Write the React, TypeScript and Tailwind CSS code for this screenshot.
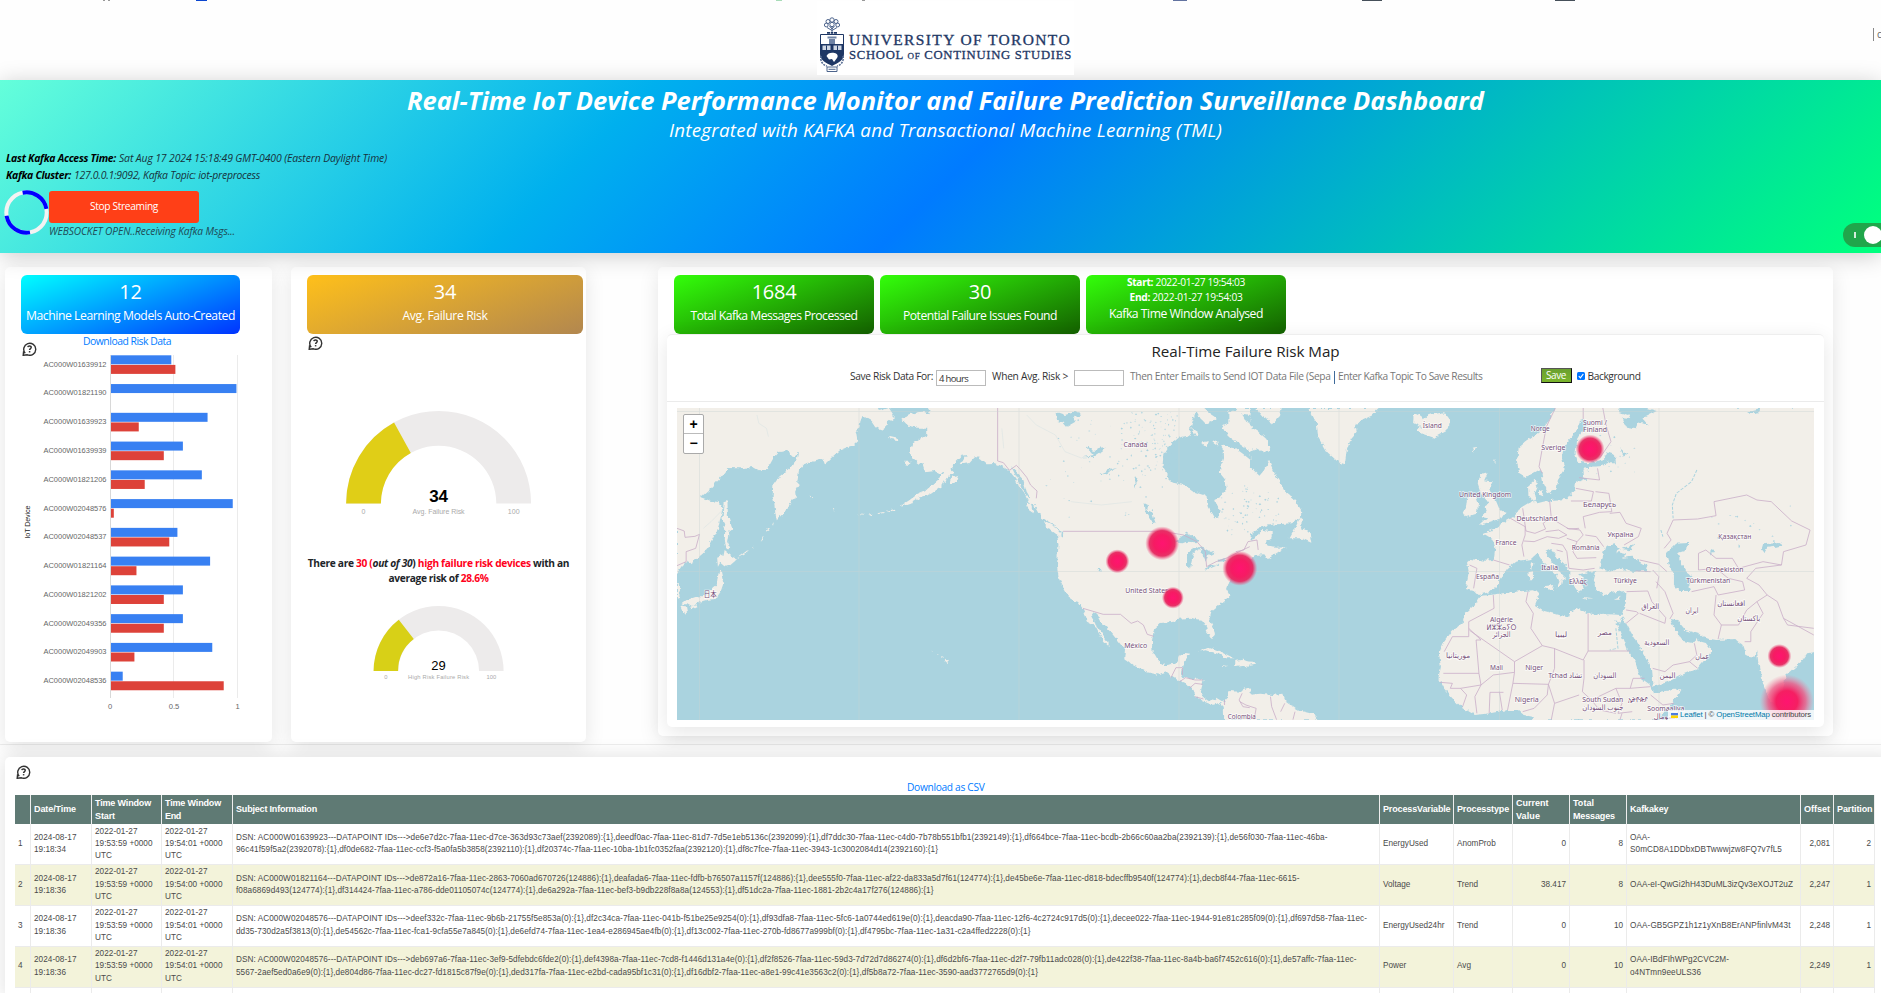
import { useLayoutEffect, useRef, type ReactNode } from "react";

/* Spreads letter-spacing so a label fills exactly the given width. */
function Fit({ w, className = "", children }: { w: number; className?: string; children: ReactNode }) {
  const ref = useRef<HTMLSpanElement>(null);
  useLayoutEffect(() => {
    const el = ref.current;
    if (!el) return;
    el.style.letterSpacing = "0px";
    const n = (el.textContent || "").length;
    const natural = el.getBoundingClientRect().width;
    el.style.letterSpacing = `${(w - natural) / n}px`;
  }, [w]);
  return (
    <span ref={ref} className={`inline-block w-max shrink-0 whitespace-nowrap ${className}`}>
      {children}
    </span>
  );
}

function HelpIcon({ className = "" }: { className?: string }) {
  return (
    <svg viewBox="0 0 15 14" className={className} fill="none" stroke="#333" strokeWidth="1.4">
      <path d="M3.2 11.2A6 6 0 1 1 5.4 12.8L1.2 13.3L1.6 9.2" />
      <path d="M5.8 5.2C6 3.6 9.4 3.6 9.2 5.5C9.1 6.6 7.6 6.6 7.6 8.1" strokeWidth="1.5" />
      <path d="M7.6 9.1V10.4" strokeWidth="1.5" />
    </svg>
  );
}

function Crest() {
  return (
    <svg viewBox="0 0 24 56" className="h-[56px] w-[24px]" fill="#1e3765">
      <g fill="none" stroke="#4d648c" strokeWidth="1">
        <circle cx="12" cy="3" r="2.2" />
        <circle cx="8" cy="4.500" r="2" />
        <circle cx="16" cy="4.500" r="2" />
        <circle cx="6.300" cy="8" r="1.900" />
        <circle cx="17.700" cy="8" r="1.900" />
        <circle cx="12" cy="7.500" r="2.200" />
        <path d="M7 10.500L12 13.500L17 10.500M12 9V15M9.500 9L12 12L14.500 9" />
      </g>
      <path d="M7 15h3v1.800H7zM10.700 15h2.600v1.800h-2.600zM14 15h3v1.800h-3z" />
      <path d="M0.5 17.5h23V28h-23z" fill="#fff" stroke="#1e3765" />
      <path d="M7.500 19.500h9v2h-9zM9 22h6v5H9z" fill="#6f83a5" />
      <path d="M0 27h24v10c0 6-6 9-12 12C6 46 0 43 0 37z" />
      <path d="M2.500 28.500h8v4.500h-8zM13.500 28.500h8v4.500h-8z" fill="#cfd7e4" />
      <path d="M6.500 28.500v4.500M17.500 28.500v4.500" stroke="#1e3765" />
      <path d="M6.500 39c1-3 5-4 8-3 3 .6 4 3 2.500 5l-3 4-2-3-3 .5z" fill="#fff" />
      <path d="M1 39c-1 4 1 9 6 10M23 39c1 4-1 9-6 10" fill="none" stroke="#5b7096" strokeWidth="1.600" strokeDasharray="2 1" />
      <path d="M7 50h10v4.500H7z" fill="#fff" stroke="#4d648c" />
      <path d="M8.500 52.300h7" stroke="#4d648c" />
    </svg>
  );
}

const bars: [string, number, number][] = [
  ["AC000W01639912", 0.482, 0.514],
  ["AC000W01821190", 0.994, 0.004],
  ["AC000W01639923", 0.767, 0.226],
  ["AC000W01639939", 0.573, 0.423],
  ["AC000W01821206", 0.722, 0.273],
  ["AC000W02048576", 0.965, 0.03],
  ["AC000W02048537", 0.53, 0.466],
  ["AC000W01821164", 0.787, 0.208],
  ["AC000W01821202", 0.573, 0.423],
  ["AC000W02049356", 0.573, 0.423],
  ["AC000W02049903", 0.804, 0.192],
  ["AC000W02048536", 0.1, 0.894],
];

function BarChart() {
  return (
    <svg viewBox="0 0 240 362" className="block h-[362px] w-[240px] font-['Liberation_Sans',sans-serif]">
      <path d="M168.500 0V343M232.500 0V343" stroke="#ebebeb" />
      {bars.map(([name, a, b], i) => {
        const y = 0.300 + i * 28.76;
        return (
          <g key={name}>
            <rect x="105" y={y} width={a * 127.2} height="9" fill="#3880f2" />
            <rect x="105" y={y + 9.600} width={b * 127.2} height="9" fill="#dd4239" />
            <text x="38.500" y={y + 11.400} fontSize="7.600" fill="#666" textLength="63" lengthAdjust="spacingAndGlyphs">
              {name}
            </text>
          </g>
        );
      })}
      <path d="M105.500 0V343" stroke="#d8d8d8" />
      <g fontSize="7.600" fill="#666" textAnchor="middle">
        <text x="105" y="353.500">0</text>
        <text x="169" y="353.500">0.5</text>
        <text x="232.500" y="353.500">1</text>
      </g>
      <text transform="translate(24.500 183.500) rotate(-90)" fontSize="7.200" fill="#222" textLength="33">
        IoT Device
      </text>
    </svg>
  );
}

function arc(cx: number, cy: number, R: number, r: number, from: number, to: number) {
  const p = (rad: number, t: number) => {
    const a = Math.PI * (1 - t);
    return `${cx + rad * Math.cos(a)} ${cy - rad * Math.sin(a)}`;
  };
  return `M${p(R, from)}A${R} ${R} 0 0 1 ${p(R, to)}L${p(r, to)}A${r} ${r} 0 0 0 ${p(r, from)}Z`;
}

function Gauge({ R, r, value, color, label, big }: { R: number; r: number; value: number; color: string; label: string; big: boolean }) {
  const c = 99.6;
  const y = R;
  const f = big ? 7 : 5.8;
  const ly = y + (big ? 10.500 : 8);
  return (
    <svg
      viewBox={`0 0 200 ${R + 14}`}
      className={big ? "block h-[106.500px] w-[200px] font-['Liberation_Sans',sans-serif]" : "block h-[79px] w-[200px] font-['Liberation_Sans',sans-serif]"}
    >
      <path d={arc(c, y, R, r, 0, 1)} fill="#edebeb" />
      <path d={arc(c, y, R, r, 0, value / 100)} fill={color} />
      <text x={c} y={y - 1.500} fontSize={big ? 17 : 13} fontWeight={big ? 700 : 400} fill="#000" textAnchor="middle">
        {value}
      </text>
      <g fontSize={f} fill="#aaa" textAnchor="middle">
        <text x={c - (R + r) / 2} y={ly}>0</text>
        <text x={c + (R + r) / 2} y={ly}>100</text>
        <text x={c} y={ly} textLength={big ? 52 : 61}>
          {label}
        </text>
      </g>
    </svg>
  );
}

const landWest = [
  "M71 39L596 39L600 48L625 39L640 65L620 80L618 95L605 106L590 95L580 78L556 62L550 80L548 100L538 108L543 140L534 150L515 157L497 166L480 182L460 205L445 194L420 202L404 207L390 225L385 262L392 270L380 292L382 310L365 316L368 332L356 345L332 376L328 355L326 330L321 305L323 270L338 245L370 215L388 185L392 160L407 148L402 170L388 172L380 185L365 180L360 165L338 168L325 185L312 212L305 222L285 226L270 216L235 220L205 219L188 245L160 280L133 307L160 318L183 322L190 340L182 385L175 410L160 445L140 475L122 492L105 505L95 500L82 515L71 535Z",
  "M71 563L78 580L77 608L71 611Z",
  "M193 322L203 318L204 360L216 403L206 412L202 440L210 458L202 466L196 440L197 400L190 370Z",
  "M193 465L212 482L226 492L210 508L195 514L184 503L178 515L176 488L190 482Z",
  "M182 525L189 532L194 560L185 590L172 612L150 614L132 620L110 636L98 628L82 628L95 616L125 604L142 604L160 584L175 570L177 548Z",
  "M80 632L97 634L99 646L91 659L85 646Z",
  "M105 638L122 630L124 635L108 644Z",
  "M625 122L648 128L650 136L630 132Z",
  "M665 200L682 200L676 210L668 208Z",
  "M725 39L735 58L715 50L700 52L680 58L660 74L675 92L700 98L725 98L725 120L705 132L688 145L680 168L684 188L700 204L713 208L720 232L745 228L757 236L768 228L758 250L740 268L722 286L700 296L680 314L662 328L655 336L680 326L705 308L735 296L765 272L775 250L795 232L785 222L800 200L815 182L828 180L812 208L835 205L850 186L865 190L880 205L900 204L920 213L940 228L955 250L965 275L978 295L990 320L1010 338L1025 368L1045 382L1068 400L1080 415L1082 428L1064 420L1068 450L1064 510L1068 545L1085 585L1100 615L1120 622L1132 642L1145 680L1162 690L1175 718L1185 738L1202 757L1198 742L1180 712L1165 688L1153 662L1160 652L1172 662L1182 685L1205 712L1225 740L1242 765L1240 790L1262 810L1300 832L1330 839L1350 832L1370 850L1400 864L1415 880L1428 903L1445 918L1470 930L1490 924L1500 935L1501 976L1570 976L1570 880L1545 890L1525 898L1512 906L1500 922L1480 908L1465 922L1448 908L1440 888L1447 855L1440 850L1415 852L1395 850L1388 838L1390 818L1396 800L1412 776L1400 774L1385 782L1378 805L1345 811L1328 797L1314 770L1312 735L1318 702L1335 684L1370 680L1378 672L1410 668L1440 674L1452 690L1456 708L1470 732L1477 718L1474 700L1462 672L1468 648L1500 618L1516 602L1506 582L1512 560L1525 540L1545 525L1565 500L1570 490L1570 39Z",
  "M1435 770L1462 757L1490 768L1510 780L1528 790L1505 790L1485 776L1455 766Z",
  "M1530 798L1552 794L1570 804L1565 815L1545 812L1530 812Z",
  "M1493 810L1510 813L1500 816Z",
  "M735 767L740 771L735 771ZM752 776L758 780L752 780ZM761 783L768 788L762 787ZM772 791L780 797L775 804L770 799Z",
  "M985 322L995 325L1003 355L990 345ZM1030 378L1060 395L1078 418L1070 424L1055 410L1036 395Z",
  "M320 388L324 382L322 392ZM308 400L304 410L311 405ZM296 425L290 440L298 432ZM272 455L262 462L270 461ZM255 466L228 490L236 485L258 470Z",
  "M418 298L424 308L420 310ZM480 340L485 345L481 346Z",
  "M640 341L620 347L622 350L642 344ZM610 351L595 355L597 357L611 354ZM585 356L572 359L575 361L586 359ZM560 360L545 356L546 358L558 362Z",
  "M790 245L806 240L800 262L785 268Z",
];

const waterWest = [
  "M1382 128L1405 122L1420 128L1440 125L1480 138L1497 160L1498 190L1491 215L1490 235L1505 256L1507 282L1490 305L1478 312L1480 328L1489 345L1485 368L1475 370L1458 335L1455 303L1420 290L1395 270L1362 262L1350 235L1340 215L1342 180L1355 155Z",
  "M1446 39L1535 39L1530 70L1512 90L1500 108L1520 130L1545 150L1570 170L1570 195L1550 176L1530 160L1496 152L1482 165L1470 142L1415 130L1410 110L1418 80L1428 50L1440 75L1456 85L1470 78L1480 68L1462 55Z",
  "M1540 55L1570 60L1570 85L1545 75Z",
  "M1060 50L1085 60L1120 48L1128 60L1105 68L1112 80L1090 95L1080 82L1065 78Z",
  "M1372 440L1385 430L1400 412L1420 425L1436 438L1425 442L1405 440L1395 445L1380 444Z",
  "M1404 470L1425 456L1440 460L1422 470L1418 490L1412 520L1404 512Z",
  "M1435 455L1455 462L1475 475L1472 482L1460 478L1452 500L1447 485L1440 470Z",
  "M1448 519L1470 508L1486 510L1460 522Z",
  "M1484 494L1508 489L1502 499L1485 500Z",
  "M1293 325L1302 330L1300 345L1312 352L1322 385L1312 378L1296 350Z",
  "M1130 187L1160 180L1168 160L1195 155L1180 170L1160 186Z",
  "M1140 155L1155 160L1165 175L1158 180Z",
  "M1178 236L1200 225L1222 218L1205 228L1185 238Z",
  "M1265 245L1275 255L1268 278Z",
  "M1175 518L1179 530L1173 528Z",
  "M945 215L975 250L985 290L995 310L982 300L966 265Z",
];

const westBorders = [
  "M909 39V198L924 203L940 226L958 211L968 223L985 247L995 270L1012 288L1010 310",
  "M1080 409H1340L1395 420L1430 440L1452 470L1455 515L1480 500L1510 488L1540 470L1568 455",
  "M1132 640L1185 658H1230L1258 685L1275 678L1290 690L1300 718L1317 724",
  "M71 400L90 408L92 427L118 424L130 418L120 460L95 470V500L71 512",
  "M1362 848L1375 818H1392V840M1385 860L1400 848L1425 855L1445 855M1410 880L1425 865L1445 868M1425 905L1447 912M1502 915V930M1548 895L1540 915L1550 935L1568 938",
];

const landEast = [
  "M-28 165L0 180L12 190L25 215L48 242L62 222L72 198L85 235L98 260L110 290L135 315L150 345L150 365L125 385L90 388L62 392L38 408L8 440L35 432L55 405L78 408L78 430L65 442L68 455L90 458L112 457L95 470L68 492L60 478L35 480L15 498L8 520L-28 540Z",
  "M-28 50L-5 45L8 62L20 90L45 110L65 132L75 165L58 172L40 160L22 168L0 130L-28 105Z",
  "M38 39L100 39L96 62L78 90L70 75L55 65Z",
  "M168 39L342 39L322 62L300 75L282 90L286 110L272 130L262 165L257 208L240 200L213 170L192 125L188 85Z",
  "M425 62L442 52L447 76L462 60L500 52L515 75L510 105L475 128L450 118L430 106L444 96L424 84Z",
  "M588 240L606 234L598 256L618 260L610 282L624 310L636 345L650 350L640 370L618 378L587 390L605 370L592 366L604 350L598 334L608 326L594 305L588 290L582 268Z",
  "M556 310L578 304L583 322L580 355L550 367L545 355L553 340Z",
  "M122 430L133 405L148 366L152 370L150 398L170 410L175 443L150 430Z",
  "M772 39L757 75L745 102L722 122L700 140L682 158L678 200L684 235L700 246L722 232L736 222L742 262L755 295L775 282L778 255L795 225L788 190L792 155L805 138L822 110L832 78L848 72L850 90L826 130L821 180L828 200L852 205L895 192L904 207L880 214L850 216L838 224L840 246L850 252L832 262L820 258L818 285L802 312L768 314L742 320L728 325L714 312L706 300L705 272L724 252L728 278L720 300L728 312L705 325L682 342L672 365L650 380L628 398L595 415L618 432L625 458L621 495L600 497L565 492L556 502L560 530L553 582L572 588L582 600L610 592L632 568L632 555L655 520L672 502L690 496L712 492L728 475L740 498L755 518L775 540L782 560L775 580L785 575L788 558L798 550L778 524L757 490L748 470L762 462L778 488L795 508L806 525L806 548L815 568L828 592L842 582L832 560L842 548L830 538L855 530L872 528L866 555L870 580L892 600L918 592L946 588L944 625L934 660L905 658L882 660L850 655L828 640L808 650L806 668L775 658L745 648L722 630L732 600L720 586L690 588L648 594L612 600L590 602L578 625L552 655L548 680L518 710L500 740L487 775L492 815L486 850L498 878L520 910L545 938L575 960L612 955L655 945L680 945L695 960L716 965L718 976L1018 976L1052 935L1080 882L1040 888L1012 895L1002 868L980 848L968 800L948 768L932 718L918 672L930 690L936 664L955 708L985 770L1005 812L1010 875L1045 862L1085 838L1120 820L1155 768L1140 744L1122 738L1120 725L1112 745L1085 738L1062 700L1052 672L1070 675L1090 705L1125 718L1135 728L1165 735L1212 732L1232 752L1240 782L1262 785L1265 765L1268 800L1275 850L1298 918L1312 932L1328 890L1336 840L1375 798L1388 775L1410 770L1410 35L772 35Z",
  "M742 574L769 570L765 588Z",
  "M706 532L718 528L716 556L708 556Z",
  "M711 506L718 504L715 528Z",
  "M840 606L865 610L845 611ZM915 614L932 605L926 614Z",
  "M732 290L742 286L740 304L732 300Z",
  "M-5 798L35 800L40 806L10 812L-5 815Z",
  "M-28 888L0 890L12 880L20 900L50 896L80 900L104 896L112 918L138 940L150 948L182 958L190 976L-28 976Z",
  "M570 155L578 153L574 170ZM622 200L626 192L625 205Z",
];

const waterEast = [
  "M880 520L884 490L895 452L918 448L930 462L918 470L945 478L935 488L960 485L978 500L998 515L995 528L960 530L928 520L905 530Z",
  "M936 462L966 446L955 466Z",
  "M1042 475L1065 446L1097 444L1094 465L1070 475L1080 505L1095 535L1105 545L1098 565L1104 588L1078 588L1062 570L1062 540L1050 512Z",
  "M1275 468L1280 448L1320 444L1330 452L1290 458L1285 470Z",
  "M898 172L918 180L920 205L905 205L893 190Z",
  "M930 160L948 178L940 184Z",
  "M930 35L985 35L1020 48L985 70L1000 92L975 82L968 100L945 95L936 70L955 72L950 60L925 50Z",
  "M1152 462L1160 466L1150 482Z",
  "M1220 445L1224 450L1220 460Z",
  "M1255 45L1275 39L1270 52L1240 58Z",
];

const eastBorders = [
  "M772 39L750 95L740 160L732 215L740 235M840 39V72M888 39L896 90L908 140L880 190",
  "M875 220L880 255L830 248M870 290L903 295L910 350L880 352L840 365L845 400M822 280L865 290L860 318H810",
  "M905 355L930 352L945 385L982 400L975 425L940 450M758 318L762 370L805 402L830 400M758 370L742 385L748 402L722 415L700 408L692 340",
  "M662 370L698 395V420L690 450L695 485M748 410L780 405L800 420L780 430L752 425L720 440L695 438",
  "M800 400L832 405L840 420L825 440L800 430M825 440L815 470L825 490L872 488M845 420L872 425L890 455M762 445L790 450L800 470L805 520L840 525L868 520M790 470L775 465",
  "M620 495L660 510M562 510L580 520L572 580M620 600L622 640L560 680V725H520L500 770",
  "M562 706L672 800L740 752L712 700L718 655L700 620L705 590M740 752L768 760L840 795L852 768V655M852 768H955",
  "M560 700L590 735H578L585 835H498M585 835L590 870L620 840L672 832L672 800M672 832L668 865L755 868L770 820V760M842 795V850L838 890L860 915L920 880L955 880L962 850L990 850",
  "M490 862L520 865L515 880L540 880L555 900L545 935M540 880L590 870M590 870L575 905L580 955M610 955L612 892H645M635 890L642 945M655 945L668 865M755 868L752 900L720 940L692 950M755 868L770 925L830 900M770 925L762 974M860 915L880 945L920 955M920 880L935 925L925 955L960 950M955 880L1005 875M1005 900L1035 930L1062 925M935 955L930 974",
  "M945 645L970 650L975 655L945 685M946 590L998 588L1008 620L1042 668L1040 685L978 655M1018 560L1040 590L1060 655L1052 672M978 495L1025 508L1045 530M1010 525L1025 545L1020 580M1010 820L1040 830L1060 810L1100 800M1112 745L1118 780L1100 800L1120 820M968 528L1005 530",
  "M1045 415L1060 375L1120 372L1165 362L1160 320L1240 300L1265 315L1300 320L1350 378L1395 405L1385 450L1330 470L1325 510L1280 500L1220 520L1205 490L1165 490L1140 465L1122 475V525M1045 415L1055 435L1038 460",
  "M1122 525L1165 520L1195 550L1230 560L1235 585L1170 600L1160 575L1105 590M1165 600L1160 660L1178 690L1170 732M1178 690L1220 690L1240 645L1265 620L1290 600L1315 620L1330 670L1404 720M1290 600L1270 570L1240 550L1262 520L1325 510M1265 620L1280 655L1250 710L1250 740L1235 740M1330 670L1340 690L1404 700",
  "M-10 470L10 465L20 440L42 435L45 465M0 920L15 930L40 940L35 974M75 905L78 935L90 974M110 925L100 950M135 950L130 974",
];

const labelsWest: [string, number, number, number][] = [
  ["Canada", 1269, 157, 24],
  ["United States", 1299, 594, 43],
  ["México", 1270, 759, 23],
  ["日本", 158, 605, 13],
];
const labelsEast: [string, number, number, number][] = [
  ["Ísland", 471, 99, 19], ["Norge", 735, 107, 19], ["Suomi /", 869, 91, 24], ["Finland", 869, 112, 24],
  ["Sverige", 767, 166, 24], ["United Kingdom", 600, 305, 52], ["Беларусь", 880, 335, 33], ["Deutschland", 727, 379, 41],
  ["Україна", 931, 427, 26], ["Қазақстан", 1211, 433, 33], ["France", 651, 450, 21], ["România", 846, 464, 28],
  ["Italia", 758, 526, 17], ["España", 606, 552, 23], ["Ελλάς", 827, 566, 18], ["Türkiye", 943, 564, 23],
  ["O'zbekiston", 1186, 530, 38], ["Türkmenistan", 1146, 565, 44], ["افغانستان", 1202, 632, 28], ["باكستان", 1245, 679, 23],
  ["العراق", 1004, 641, 18], ["ایران", 1106, 653, 13], ["Algérie", 640, 682, 23], ["ⵍⵣⵣⴰⵢⵔ", 640, 704, 30], ["الجزائر", 640, 727, 18],
  ["ليبيا", 786, 725, 12], ["مصر", 893, 719, 14], ["السعودية", 1020, 751, 25], ["عمان", 1131, 791, 14], ["موريتانيا", 534, 788, 24],
  ["Mali", 628, 826, 13], ["Niger", 720, 826, 18], ["Tchad تشاد", 796, 850, 34], ["السودان", 893, 850, 23], ["اليمن", 1046, 848, 16],
  ["Nigeria", 702, 921, 24], ["South Sudan", 888, 921, 41], ["جنوب السودان", 888, 944, 41], ["ኢትዮጵያ", 974, 920, 20], ["Soomaaliya", 1042, 949, 37], ["الصومال", 1042, 973, 24],
  ["Colombia", 5, 971, 28],
];

function scatter(seed: number, count: number, x0: number, y0: number, w: number, h: number) {
  let s = seed;
  const next = () => (s = (s * 16807) % 2147483647) / 2147483647;
  for (let i = 0; i < 5; i++) next();
  let d = "";
  for (let i = 0; i < count; i++) {
    const x = x0 + next() * w;
    const y = y0 + next() * h;
    const a = 0.8 + next() * 2.6;
    const b = 0.8 + next() * 3;
    d += `M${x.toFixed(1)} ${y.toFixed(1)}l${a.toFixed(1)} ${(-b).toFixed(1)}l${a.toFixed(1)} ${b.toFixed(1)}l${(-a).toFixed(1)} ${(b * 0.8).toFixed(1)}Z`;
  }
  return d;
}

const WEST = "translate(-27.2 -13) scale(0.38265 0.33333)";
const EAST = "translate(562.8 -13) scale(0.4088 0.33333)";
const heat: [number, number, number][] = [
  [440.400, 153.300, 12],
  [485.200, 135.300, 17],
  [562.800, 160.300, 17.500],
  [495.900, 189.700, 11],
  [913.100, 41, 14.500],
  [1102.400, 248, 12],
];

function RiskMap() {
  const labels = [
    ...labelsWest.map(([t, x, y, w]) => [t, x * 0.38265 - 27.2, y / 3 - 13, w] as const),
    ...labelsEast.map(([t, x, y, w]) => [t, x * 0.4088 + 562.8, y / 3 - 13, w] as const),
  ];
  return (
    <svg viewBox="0 0 1137 312" className="block h-[312px] w-[1137px] bg-[#aad3df] font-['Noto_Sans','Noto_Sans_CJK_JP','DejaVu_Sans',sans-serif]">
      <defs>
        <radialGradient id="heat">
          <stop offset="0" stopColor="#ff1470" />
          <stop offset="0.5" stopColor="#f61b63" />
          <stop offset="0.75" stopColor="#e62860" stopOpacity="0.95" />
          <stop offset="1" stopColor="#f05080" stopOpacity="0" />
        </radialGradient>
        <radialGradient id="heatWide">
          <stop offset="0" stopColor="#ff1470" />
          <stop offset="0.4" stopColor="#f51f62" />
          <stop offset="0.7" stopColor="#ec5a86" stopOpacity="0.8" />
          <stop offset="1" stopColor="#f080a0" stopOpacity="0" />
        </radialGradient>
        <filter id="coast" filterUnits="userSpaceOnUse" x="-10" y="-10" width="1157" height="332">
          <feTurbulence type="fractalNoise" baseFrequency="0.22" numOctaves="2" seed="4" />
          <feDisplacementMap in="SourceGraphic" scale="5" xChannelSelector="R" yChannelSelector="G" />
        </filter>
      </defs>
      <g filter="url(#coast)">
        <g transform={WEST}>
          <g fill="#f2efe9">{landWest.map((d) => <path key={d} d={d} />)}</g>
          <path d="M60 20H600V39H60ZM725 20H1446V39H725ZM60 39H75V400H60Z" fill="#f2efe9" />
          <g fill="#aad3df">{waterWest.map((d) => <path key={d} d={d} />)}</g>
          <path d="M1415 98L1432 110L1428 125ZM1440 145L1458 138L1455 155Z M1495 95L1515 85L1535 110L1520 122Z M1470 142L1482 135L1486 155Z" fill="#f2efe9" />
        </g>
        <g transform={EAST}>
          <g fill="#f2efe9">{landEast.map((d) => <path key={d} d={d} />)}</g>
          <path d="M1400 20H1425V770H1400Z" fill="#f2efe9" />
          <g fill="#aad3df">{waterEast.map((d) => <path key={d} d={d} />)}</g>
        </g>
      </g>
      <g transform={WEST}>
        <g fill="#aad3df">
          <path d={scatter(4171, 55, 1030, 60, 320, 310)} />
          <path d={scatter(9743, 110, 1230, 50, 150, 180)} />
          <path d={scatter(1389, 35, 1490, 270, 75, 150)} />
        </g>
        <g fill="none" stroke="#c9adc8" strokeWidth="0.8">
          {westBorders.map((d) => <path key={d} d={d} vectorEffect="non-scaling-stroke" />)}
        </g>
        <path
          d="M280 60L285 85L305 100L310 125M190 345L160 380L140 400M985 60L1010 90L1060 120L1085 170L1130 190M1100 320L1180 330L1260 320M920 100L925 160"
          fill="none"
          stroke="#dfe6e4"
          strokeWidth="2"
        />
      </g>
      <g transform={EAST}>
        <g fill="#aad3df">
          <path d={scatter(2917, 30, 5, 290, 90, 90)} />
          <path d={scatter(5759, 22, 835, 110, 130, 130)} />
          <path d={scatter(8311, 16, 1150, 330, 200, 110)} />
        </g>
        <path
          d="M1118 225L1105 260L1068 295L1058 330L1060 370M1030 405L1035 425M920 700L925 760L905 765"
          fill="none"
          stroke="#aad3df"
          strokeWidth="2.500"
          strokeDasharray="9 4"
        />
        <g fill="none" stroke="#c9adc8" strokeWidth="0.8">
          {eastBorders.map((d) => <path key={d} d={d} vectorEffect="non-scaling-stroke" />)}
        </g>
      </g>
      <path d="M22.500 0V312M182 0V312M342 0V312M502 0V312M662 0V312M822.500 0V312M982 0V312M0 163.500H1137M0 3.500H1137" stroke="#c9d3d3" strokeWidth="0.8" opacity="0.5" />
      <g fontSize="7.600" fill="#76507a" textAnchor="middle" stroke="#fff" strokeOpacity="0.75" strokeWidth="1.600" paintOrder="stroke">
        {labels.map(([t, x, y, w], i) => (
          <text key={i} x={x} y={y} textLength={w} lengthAdjust="spacingAndGlyphs">
            {t}
          </text>
        ))}
      </g>
      {heat.map(([x, y, r]) => (
        <circle key={x} cx={x} cy={y} r={r} fill="url(#heat)" />
      ))}
      <circle cx="1109.800" cy="293.500" r="27" fill="url(#heatWide)" />
    </svg>
  );
}

type Row = { n: number; date: string; end: string; subj: [string, number][]; pv: string; pt: string; cv: string; tm: string; key: [string, number][]; off: string; part: string };
const rows: Row[] = [
  {
    n: 1, date: "19:18:34", end: "19:54:01 +0000",
    subj: [
      ["DSN: AC000W01639923---DATAPOINT IDs--->de6e7d2c-7faa-11ec-d7ce-363d93c73aef(2392089):{1},deedf0ac-7faa-11ec-81d7-7d5e1eb5136c(2392099):{1},df7ddc30-7faa-11ec-c4d0-7b78b551bfb1(2392149):{1},df664bce-7faa-11ec-bcdb-2b66c60aa2ba(2392139):{1},de56f030-7faa-11ec-46ba-", 1091.500],
      ["96c41f59f5a2(2392078):{1},df0de682-7faa-11ec-ccf3-f5a0fa5b3858(2392110):{1},df20374c-7faa-11ec-10ba-1b1fc0352faa(2392120):{1},df8c7fce-7faa-11ec-3943-1c3002084d14(2392160):{1}", 702],
    ],
    pv: "EnergyUsed", pt: "AnomProb", cv: "0", tm: "8", key: [["OAA-", 20], ["S0mCD8A1DDbxDBTwwwjzw8FQ7v7fL5", 152]], off: "2,081", part: "2",
  },
  {
    n: 2, date: "19:18:36", end: "19:54:00 +0000",
    subj: [
      ["DSN: AC000W01821164---DATAPOINT IDs--->de872a16-7faa-11ec-2863-7060ad670726(124886):{1},deafada6-7faa-11ec-fdfb-b76507a1157f(124886):{1},dee555f0-7faa-11ec-af22-da833a5d7f61(124774):{1},de45be6e-7faa-11ec-d818-bdecffb9540f(124774):{1},decb8f44-7faa-11ec-6615-", 1063.500],
      ["f08a6869d493(124774):{1},df314424-7faa-11ec-a786-dde01105074c(124774):{1},de6a292a-7faa-11ec-bef3-b9db228f8a8a(124553):{1},df51dc2a-7faa-11ec-1881-2b2c4a17f276(124886):{1}", 697.500],
    ],
    pv: "Voltage", pt: "Trend", cv: "38.417", tm: "8", key: [["OAA-eI-QwGi2hH43DuML3izQv3eXOJT2uZ", 163]], off: "2,247", part: "1",
  },
  {
    n: 3, date: "19:18:36", end: "19:54:01 +0000",
    subj: [
      ["DSN: AC000W02048576---DATAPOINT IDs--->deef332c-7faa-11ec-9b6b-21755f5e853a(0):{1},df2c34ca-7faa-11ec-041b-f51be25e9254(0):{1},df93dfa8-7faa-11ec-5fc6-1a0744ed619e(0):{1},deacda90-7faa-11ec-12f6-4c2724c917d5(0):{1},decee022-7faa-11ec-1944-91e81c285f09(0):{1},df697d58-7faa-11ec-", 1131],
      ["dd35-730d2a5f3813(0):{1},de54562c-7faa-11ec-fca1-9cfa55e7a845(0):{1},de6efd74-7faa-11ec-1ea4-e286945ae4fb(0):{1},df13c002-7faa-11ec-270b-fd8677a999bf(0):{1},df4795bc-7faa-11ec-1a31-c2a4ffed2228(0):{1}", 794.500],
    ],
    pv: "EnergyUsed24hr", pt: "Trend", cv: "0", tm: "10", key: [["OAA-GB5GPZ1h1z1yXnB8ErANPfinlvM43t", 160.500]], off: "2,248", part: "1",
  },
  {
    n: 4, date: "19:18:36", end: "19:54:01 +0000",
    subj: [
      ["DSN: AC000W02048576---DATAPOINT IDs--->deb697a6-7faa-11ec-3ef9-5dfebdc6fde2(0):{1},def4398a-7faa-11ec-7cd8-f1446d131a4e(0):{1},df2f8526-7faa-11ec-59d3-7d72d7d86274(0):{1},df6d2bf6-7faa-11ec-d2f7-79fb11adc028(0):{1},de422f38-7faa-11ec-8a4b-ba6f7452c616(0):{1},de57affc-7faa-11ec-", 1120.500],
      ["5567-2aef5ed0a6e9(0):{1},de804d86-7faa-11ec-dc27-fd1815c87f9e(0):{1},ded317fa-7faa-11ec-e2bd-cada95bf1c31(0):{1},df16dbf2-7faa-11ec-a8e1-99c41e3563c2(0):{1},df5b8a72-7faa-11ec-3590-aad3772765d9(0):{1}", 802],
    ],
    pv: "Power", pt: "Avg", cv: "0", tm: "10", key: [["OAA-IBdFIhWPg2CVC2M-", 99], ["o4NTmn9eeULS36", 71]], off: "2,249", part: "1",
  },
];

const GRID = "grid w-[1860px] grid-cols-[16px_61px_70px_71px_1147px_74px_59px_57px_57px_174px_33px_41px]";
const TH = "flex flex-col justify-center border-r border-[#eee] pl-[3px] leading-[12.7px]";
const TD = "flex flex-col justify-center border-r border-b border-[#ebebeb] pl-[3px] leading-[12.3px]";
const TDR = "flex items-center justify-end border-r border-b border-[#ebebeb] pr-[3px]";

function Table() {
  return (
    <div className="font-['Liberation_Sans',Arial,sans-serif] text-[8.2px] text-[#4a4a4a]">
      <div className={`${GRID} h-[29px] bg-[#5f7a74] text-[9px] font-bold text-white`}>
        <div className={TH} />
        <div className={TH}><Fit w={42}>Date/Time</Fit></div>
        <div className={TH}><Fit w={56}>Time Window</Fit><Fit w={20}>Start</Fit></div>
        <div className={TH}><Fit w={56}>Time Window</Fit><Fit w={16}>End</Fit></div>
        <div className={TH}><Fit w={81}>Subject Information</Fit></div>
        <div className={TH}><Fit w={67.500}>ProcessVariable</Fit></div>
        <div className={TH}><Fit w={52}>Processtype</Fit></div>
        <div className={TH}><Fit w={32.500}>Current</Fit><Fit w={24}>Value</Fit></div>
        <div className={TH}><Fit w={21}>Total</Fit><Fit w={42}>Messages</Fit></div>
        <div className={TH}><Fit w={38.500}>Kafkakey</Fit></div>
        <div className={TH}><Fit w={26}>Offset</Fit></div>
        <div className={TH}><Fit w={35.500}>Partition</Fit></div>
      </div>
      {rows.map((r) => (
        <div key={r.n} className={`${GRID} h-[40.9px] ${r.n % 2 ? "bg-white" : "bg-[#f3f3da]"}`}>
          <div className={TD}>{r.n}</div>
          <div className={TD}><Fit w={42.500}>2024-08-17</Fit><Fit w={32}>{r.date}</Fit></div>
          <div className={TD}><Fit w={42.500}>2022-01-27</Fit><Fit w={57.500}>19:53:59 +0000</Fit><Fit w={17}>UTC</Fit></div>
          <div className={TD}><Fit w={42.500}>2022-01-27</Fit><Fit w={57.500}>{r.end}</Fit><Fit w={17}>UTC</Fit></div>
          <div className={TD}>{r.subj.map(([t, w]) => <Fit key={t} w={w}>{t}</Fit>)}</div>
          <div className={TD}>{r.pv}</div>
          <div className={TD}>{r.pt}</div>
          <div className={TDR}>{r.cv}</div>
          <div className={TDR}>{r.tm}</div>
          <div className={TD}>{r.key.map(([t, w]) => <Fit key={t} w={w}>{t}</Fit>)}</div>
          <div className={TDR}>{r.off}</div>
          <div className={TDR}>{r.part}</div>
        </div>
      ))}
      <div className={`${GRID} h-[12px]`}>
        {Array.from({ length: 12 }, (_, i) => (
          <div key={i} className="border-r border-[#ebebeb]" />
        ))}
      </div>
    </div>
  );
}

function Stat({ value, label, w, className }: { value: string; label: string; w: number; className: string }) {
  return (
    <div className={`flex h-[59px] shrink-0 flex-col items-center rounded-[6px] pt-[3px] text-white ${className}`}>
      <div className="text-[20px] leading-[27px] tracking-[-0.3px]">{value}</div>
      <Fit w={w} className="text-[12.2px] leading-[22px]">{label}</Fit>
    </div>
  );
}

const GREEN = "w-[200px] bg-[linear-gradient(160deg,#33ff0a,#146000)]";
const CARD = "rounded-[5px] bg-white shadow-[0_5px_20px_rgba(0,0,0,0.1)]";

export default function App() {
  return (
    <div className="flex h-[993px] w-[1881px] flex-col overflow-hidden bg-[#fefefe] font-['Open_Sans','Noto_Sans',sans-serif] text-[#212529]">
      <header className="relative flex h-[80px] shrink-0 flex-col">
        <svg viewBox="0 0 1881 1" className="block h-px w-full">
          <path d="M103 .5h2m3 0h2M862 .5h3" stroke="#999" />
          <path d="M196 .5h11" stroke="#0b46cf" />
          <path d="M776 .5h6" stroke="#a8dcb8" />
          <path d="M1173 .5h14" stroke="#6273a0" />
          <path d="M1362 .5h20m173 0h20" stroke="#46505a" />
        </svg>
        <div className="z-10 flex h-[74px] pl-[817px]">
          <div className="flex w-[257px] bg-white pt-[16px] pl-[3px]">
            <Crest />
            <div className="flex flex-col pt-[15px] pl-[5px] font-['Liberation_Serif',serif] text-[#1e3765]">
              <Fit w={222} className="text-[15.5px] leading-[16px] [-webkit-text-stroke:0.35px_#1e3765]">UNIVERSITY OF TORONTO</Fit>
              <Fit w={223} className="text-[12.7px] leading-[15px] [-webkit-text-stroke:0.3px_#1e3765]">SCHOOL <span className="text-[9px]">OF</span> CONTINUING STUDIES</Fit>
            </div>
          </div>
          <div className="ml-auto flex w-[8px] items-start gap-[3px] overflow-hidden pt-[26px] text-[10px] text-[#666]">
            <span className="mt-px h-[13px] w-px shrink-0 bg-[#888]" />
            <span className="leading-[14px]">c</span>
          </div>
        </div>
      </header>

      <section className="relative flex h-[173px] shrink-0 flex-col bg-[linear-gradient(135deg,#64ffda_0%,#00b0ee_32%,#007bff_51%,#00ff7f_99%)] shadow-[0_3px_22px_rgba(0,0,0,0.2)]">
        <div className="flex flex-col items-center pt-[5px] pl-[10px] text-white italic">
          <Fit w={1077} className="text-[25.5px] leading-[31px] font-bold">Real-Time IoT Device Performance Monitor and Failure Prediction Surveillance Dashboard</Fit>
          <Fit w={553} className="text-[18.8px] leading-[29px]">Integrated with KAFKA and Transactional Machine Learning (TML)</Fit>
        </div>
        <div className="flex flex-col pt-[5px] pl-[6px] text-[10.4px] leading-[17px] text-[#17313b] italic">
          <div className="flex gap-[3px]"><Fit w={110} className="font-bold text-black">Last Kafka Access Time:</Fit><Fit w={268}>Sat Aug 17 2024 15:18:49 GMT-0400 (Eastern Daylight Time)</Fit></div>
          <div className="flex gap-[3px]"><Fit w={65} className="font-bold text-black">Kafka Cluster:</Fit><Fit w={186}>127.0.0.1:9092, Kafka Topic: iot-preprocess</Fit></div>
        </div>
        <div className="flex pt-[7px] pl-[4px]">
          <svg viewBox="0 0 45 45" className="-mt-px h-[45px] w-[45px]" fill="none" strokeWidth="4">
            <circle cx="22.500" cy="22.500" r="20.200" stroke="#f3f3f3" />
            <circle cx="22.500" cy="22.500" r="20.200" stroke="#00f" strokeDasharray="31.730 31.730" transform="rotate(-101 22.500 22.500)" />
          </svg>
          <div className="flex flex-col">
            <button className="flex h-[32px] w-[150px] items-center justify-center rounded-[3px] bg-[#ff3f17] text-[10.2px] text-white"><Fit w={68}>Stop Streaming</Fit></button>
            <Fit w={186} className="text-[10.2px] leading-[16px] text-[#1f4a55] italic">WEBSOCKET OPEN..Receiving Kafka Msgs...</Fit>
          </div>
          <div className="mt-[32px] ml-auto flex h-[24px] w-[38px] items-center overflow-hidden rounded-l-full bg-[#20a64b] pl-[11px]">
            <span className="h-[6px] w-[1.5px] shrink-0 bg-white/80" />
            <span className="ml-[8.5px] h-[18px] w-[18px] shrink-0 rounded-full bg-white" />
          </div>
        </div>
      </section>

      <main className="flex h-[492px] shrink-0 items-start border-b border-[#ededed] pt-[14px] pl-[5px]">
        <div className={`${CARD} flex h-[475px] w-[267px] flex-col overflow-hidden pt-[8px]`}>
          <Stat value="12" label="Machine Learning Models Auto-Created" w={209} className="ml-[16px] w-[219px] bg-[linear-gradient(160deg,#00ffff,#0033ff)]" />
          <div className="flex h-[21px]">
            <HelpIcon className="mt-[8px] ml-[17px] h-[14px] w-[15px]" />
            <a className="ml-[46px] text-[10.4px] leading-[15px] text-[#007bff]"><Fit w={88}>Download Risk Data</Fit></a>
          </div>
          <BarChart />
        </div>

        <div className={`${CARD} ml-[19px] flex h-[475px] w-[295px] flex-col pt-[8px]`}>
          <Stat value="34" label="Avg. Failure Risk" w={85} className="ml-[16px] w-[276px] bg-[linear-gradient(160deg,#ffc01a,#b2874f)]" />
          <HelpIcon className="mt-[2px] ml-[17px] h-[14px] w-[15px]" />
          <div className="flex flex-col items-center pt-[61px]">
            <Gauge R={92.500} r={57.700} value={34} color="#e0ce17" label="Avg. Failure Risk" big />
            <div className="mt-[38.500px] flex flex-col items-center text-[10.200px] leading-[15px] font-bold">
              <Fit w={261.500}>There are <span className="text-[#ff0020]">30 (</span><i>out of 30</i>) <span className="text-[#ff0020]">high failure risk devices</span> with an</Fit>
              <Fit w={100}>average risk of <span className="text-[#ff0020]">28.6%</span></Fit>
            </div>
            <div className="mt-[20px]">
              <Gauge R={65} r={40.500} value={29} color="#d8d017" label="High Risk Failure Risk" big={false} />
            </div>
          </div>
        </div>

        <div className={`${CARD} ml-[72px] flex h-[469px] w-[1175px] flex-col pt-[8px] pl-[9px]`}>
          <div className="flex gap-[6px] pl-[7px]">
            <Stat value="1684" label="Total Kafka Messages Processed" w={167} className={GREEN} />
            <Stat value="30" label="Potential Failure Issues Found" w={154} className={GREEN} />
            <div className={`flex h-[59px] flex-col items-center rounded-[6px] text-[10.2px] leading-[15px] text-white ${GREEN}`}>
              <Fit w={118}><b>Start:</b> 2022-01-27 19:54:03</Fit>
              <Fit w={113}><b>End:</b> 2022-01-27 19:54:03</Fit>
              <Fit w={154} className="text-[12.2px] leading-[18px]">Kafka Time Window Analysed</Fit>
            </div>
          </div>
          <div className={`${CARD} flex h-[393px] w-[1157px] flex-col border-t border-[#eee]`}>
            <div className="flex h-[33px] items-center justify-center text-[15.2px] text-[#222]"><Fit w={188}>Real-Time Failure Risk Map</Fit></div>
            <div className="flex h-[34px] items-start border-b border-[#ebebeb] pl-[183px] text-[10.2px] leading-[17px] text-[#333]">
              <Fit w={83}>Save Risk Data For:</Fit>
              <div className="mt-[2px] ml-[3px] flex h-[16px] w-[50px] items-center border border-[#bbb] pl-[2px] text-[9.5px]"><Fit w={29}>4 hours</Fit></div>
              <Fit w={76} className="ml-[6px]">When Avg. Risk &gt;</Fit>
              <div className="mt-[2px] ml-[6px] h-[16px] w-[50px] border border-[#bbb]" />
              <Fit w={200.500} className="ml-[6px] text-[#777]">Then Enter Emails to Send IOT Data File (Sepa</Fit>
              <span className="mt-[3px] ml-[3px] h-[13px] w-px bg-[#3f6b9a]" />
              <Fit w={144.500} className="ml-[3.5px] text-[#777]">Enter Kafka Topic To Save Results</Fit>
              <button className="ml-[58px] flex h-[15px] w-[31px] items-center justify-center border border-t-[#555] border-r-[#111] border-b-[#111] border-l-[#555] bg-[linear-gradient(#6a9f30,#7bb52c)] text-[10px] leading-[11px] text-white"><Fit w={20}>Save</Fit></button>
              <svg viewBox="0 0 8 8" className="mt-[4px] ml-[5px] h-[8px] w-[8px]">
                <rect width="8" height="8" rx="1.5" fill="#0075ff" />
                <path d="M1.800 4.200L3.400 5.800L6.300 2" fill="none" stroke="#fff" strokeWidth="1.200" />
              </svg>
              <Fit w={53} className="ml-[3px]">Background</Fit>
            </div>
            <div className="relative mt-[6px] ml-[10px] h-[312px] w-[1137px]">
              <RiskMap />
              <div className="absolute top-[6px] left-[6px] flex h-[40px] w-[21px] flex-col rounded-[2px] border border-[#aaa] bg-white font-['Liberation_Sans',sans-serif] text-[14px] leading-[19px] font-bold text-black">
                <span className="h-[19px] border-b border-[#bbb] text-center">+</span>
                <span className="text-center">−</span>
              </div>
              <div className="absolute right-0 bottom-0 flex h-[10px] items-center bg-white/80 pr-[3px] pl-[3px] font-['Liberation_Sans',sans-serif] text-[7.8px] text-[#444]">
                <svg viewBox="0 0 7 5" className="mr-[2px] h-[5px] w-[7px]">
                  <path d="M0 0h7v2.500H0z" fill="#4c7be1" />
                  <path d="M0 2.500h7V5H0z" fill="#ffd500" />
                </svg>
                <Fit w={131}><span className="text-[#0078a8]">Leaflet</span> | © <span className="text-[#0078a8]">OpenStreetMap</span> contributors</Fit>
              </div>
            </div>
          </div>
        </div>
      </main>

      <section className="flex shrink-0 flex-col pt-[12px] pl-[5px]">
        <div className="flex h-[240px] w-[1890px] flex-col rounded-tl-[5px] bg-white pt-[7px] pl-[10px] shadow-[0_0_20px_rgba(0,0,0,0.12)]">
          <div className="flex h-[31px] shrink-0">
            <HelpIcon className="mt-px ml-px h-[14px] w-[15px]" />
            <a className="mt-[16px] ml-[876px] text-[10.200px] leading-[15px] text-[#007bff]"><Fit w={77.500}>Download as CSV</Fit></a>
          </div>
          <Table />
        </div>
      </section>
    </div>
  );
}
